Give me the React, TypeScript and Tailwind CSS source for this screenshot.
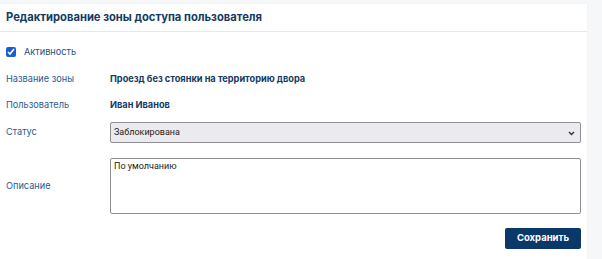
export default function App() {
  return (
    <div className="h-[259px] w-[602px] overflow-hidden bg-[#f6f7f9] font-['Inter',sans-serif]">
      <div className="ml-0 mt-[4px] h-[255px] w-[587px] bg-white shadow-[0_0_2px_rgba(0,0,0,0.06)]">
        <div className="flex h-[28px] items-center border-b border-[#e8e9ec] px-[6px]">
          <h1 className="text-[11.2px] font-bold text-[#123a63]">
            Редактирование зоны доступа пользователя
          </h1>
        </div>

        <div className="px-[6px] pt-[13px]">
          <label className="flex items-center gap-[8px] text-[9.2px] text-[#24507f]">
            <input type="checkbox" defaultChecked className="m-0 h-[10px] w-[10px] accent-[#1a5fd0]" />
            Активность
          </label>

          <div className="mt-[14px] flex h-[12px] items-center text-[9.2px]">
            <span className="w-[104px] text-[#2b5b8e]">Название зоны</span>
            <span className="font-bold text-[#123a63]">Проезд без стоянки на территорию двора</span>
          </div>

          <div className="mt-[14px] flex h-[12px] items-center text-[9.2px]">
            <span className="w-[104px] text-[#2b5b8e]">Пользователь</span>
            <span className="font-bold text-[#123a63]">Иван Иванов</span>
          </div>

          <div className="mt-[11px] flex items-center text-[9.2px]">
            <span className="w-[104px] text-[#2b5b8e]">Статус</span>
            <div className="relative flex h-[21px] w-[471px] items-center rounded-[2px] border border-[#8f8f94] bg-[#ebeaef] px-[3px] font-['Roboto',sans-serif] text-[9px] text-[#1c1c1c]">
              Заблокирована
              <svg className="absolute right-[5px] top-[8px]" width="7" height="5" viewBox="0 0 7 5">
                <path d="M1 1l2.5 2.5L6 1" fill="none" stroke="#333" strokeWidth="1.4" />
              </svg>
            </div>
          </div>

          <div className="mt-[15px] flex items-center text-[9.2px]">
            <span className="w-[104px] text-[#2b5b8e]">Описание</span>
            <textarea
              defaultValue="По умолчанию"
              className="h-[56px] w-[471px] resize-none rounded-[2px] border border-[#8f8f94] px-[3px] py-[1px] font-['Roboto',sans-serif] text-[9px] text-[#1c1c1c] outline-none"
            />
          </div>

          <div className="mt-[14px] flex justify-end">
            <button className="h-[21px] w-[76px] rounded-[2px] bg-[#0a3868] text-[9.5px] font-bold text-white">
              Сохранить
            </button>
          </div>
        </div>
      </div>
    </div>
  );
}
